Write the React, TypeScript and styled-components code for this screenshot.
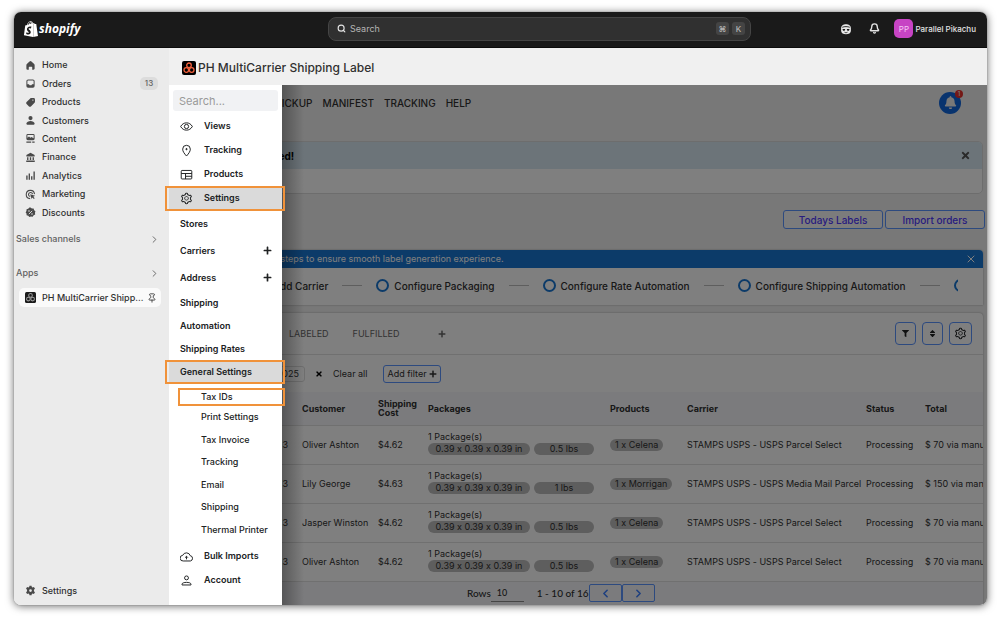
import React from "react";
import styled, { createGlobalStyle } from "styled-components";
import { SiShopify } from "react-icons/si";
import { FaPlus, FaTimes, FaFilter, FaSort, FaBell } from "react-icons/fa";
import { AiOutlineSetting } from "react-icons/ai";
import { Search, Bell, ChevronRight, ChevronLeft, X, Pin } from "lucide-react";

const Global = createGlobalStyle`
  *, *::before, *::after { box-sizing: border-box; }
  body { margin: 0; background: #fff; font-family: Inter, "Liberation Sans", sans-serif; font-size: 9px; line-height: 12px; color: #303030; font-variant-ligatures: no-contextual; }
  button, input, select { font: inherit; color: inherit; margin: 0; }
  button { cursor: pointer; padding: 0; border: 0; background: none; }
  a { color: inherit; text-decoration: none; }
  ul { list-style: none; margin: 0; padding: 0; }
  svg { display: block; flex: none; }
`;

const Page = styled.div`
  padding: 12px 13px 12px 14px;
`;
const Window = styled.div`
  border-radius: 7px;
  overflow: hidden;
  background: #f0f0f0;
`;
const Shadow = styled.div`
  border-radius: 7px;
  box-shadow: 0 1px 8px rgba(0, 0, 0, 0.6), 0 0 1px rgba(0, 0, 0, 0.6);
`;

/* ---------- top bar ---------- */
const TopBar = styled.header`
  display: grid;
  grid-template-columns: 305px minmax(0, 423px) 1fr;
  align-items: center;
  height: 36px;
  padding: 0 11px 2px 9px;
  background: #1a1a1a;
  color: #e3e3e3;
  border-bottom: 1px solid #0c0c0c;
`;
const Logo = styled.a`
  display: flex;
  align-items: center;
  color: #fff;
  font: italic 700 12px/16px "Open Sans", sans-serif;
`;
const SearchBar = styled.label`
  display: flex;
  align-items: center;
  gap: 4px;
  height: 24px;
  padding: 0 5px 0 8px;
  border: 1px solid #454545;
  border-radius: 8px;
  background: #303030;
`;
const SearchInput = styled.input`
  flex: 1;
  min-width: 0;
  border: 0;
  padding: 0;
  outline: 0;
  background: none;
  font-size: 9px;
  &::placeholder { color: #b5b5b5; opacity: 1; }
`;
const Key = styled.kbd`
  display: grid;
  place-items: center;
  width: 13px;
  height: 13px;
  margin-left: -1px;
  border-radius: 3px;
  background: #444;
  color: #b5b5b5;
  font: 500 8px/12px Inter, "DejaVu Sans", sans-serif;
`;
const TopActions = styled.div`
  display: flex;
  align-items: center;
  justify-content: flex-end;
`;
const TopIcon = styled.button`
  display: grid;
  place-items: center;
  width: 29px;
  height: 20px;
`;
const Account = styled.button`
  display: flex;
  align-items: center;
  gap: 2px;
  margin-left: 5px;
  font-weight: 500;
  font-size: 8px;
`;
const Avatar = styled.span`
  display: grid;
  place-items: center;
  width: 19px;
  height: 19px;
  border-radius: 5px;
  background: #c744c4;
  color: #f6c8f5;
  font-weight: 400;
`;

/* ---------- left navigation ---------- */
const Body = styled.div`
  display: grid;
  grid-template-columns: 155px minmax(0, 1fr);
`;
const Side = styled.nav`
  display: flex;
  flex-direction: column;
  background: #ebebeb;
  padding: 8px 0 4px;
  font-weight: 500;
`;
const NavList = styled.ul`
  display: grid;
  grid-auto-rows: 1fr;
  height: 166px;
`;
const NavLink = styled.a`
  display: flex;
  align-items: center;
  gap: 6px;
  height: 100%;
  padding: 0 11px;
`;
const Count = styled.span`
  margin-left: auto;
  width: 18px;
  line-height: 13px;
  border-radius: 5px;
  background: #dcdcdc;
  color: #616161;
  text-align: center;
  font-size: 8px;
`;
const Group = styled.button`
  display: flex;
  align-items: center;
  justify-content: space-between;
  height: 34px;
  padding: 0 9px 0 2px;
  color: #616161;
  font-weight: 500;
`;
const AppLink = styled.a`
  display: flex;
  align-items: center;
  gap: 6px;
  height: 19px;
  margin: -2px 8px 0 5px;
  padding: 0 4px 0 6px;
  border-radius: 5px;
  background: #fafafa;
  font-weight: 500;
  white-space: nowrap;
`;
const AppName = styled.span`
  flex: 1;
  min-width: 0;
`;
const SideBottom = styled.div`
  margin-top: auto;
  height: 20px;
`;

/* ---------- embedded app ---------- */
const AppTitle = styled.h1`
  display: flex;
  align-items: center;
  gap: 2px;
  height: 37px;
  margin: 0;
  padding: 2px 0 0 13px;
  font-weight: 500;
  font-size: 12px;
  line-height: 16px;
`;
const AppArea = styled.div`
  position: relative;
  display: grid;
  grid-template-columns: minmax(0, 1fr);
`;
const Content = styled.main`
  grid-area: 1 / 1;
  padding: 0 4px 0 6px;
  background: #f0f0f0;
  overflow: hidden;
`;
const Backdrop = styled.div`
  position: absolute;
  inset: 0;
  background: linear-gradient(90deg, rgba(0, 0, 0, 0.3) 113px, transparent 135px), rgba(0, 0, 0, 0.5);
`;
const Drawer = styled.nav`
  position: relative;
  grid-area: 1 / 1;
  width: 113px;
  padding-top: 5px;
  background: #fff;
  color: #202223;
  font-weight: 600;
`;
const DrawerSearch = styled.input`
  display: block;
  width: 105px;
  height: 21px;
  margin: 0 4px 3px;
  padding: 0 6px;
  border: 0;
  border-radius: 3px;
  background: #f1f2f4;
  font-size: 11px;
  font-weight: 400;
  &::placeholder { color: #9a9a9a; opacity: 1; }
`;
const MainItem = styled.a<{ $active?: boolean }>`
  position: relative;
  display: flex;
  align-items: center;
  gap: 11px;
  height: 24px;
  padding-left: 11px;
  background: ${(p) => (p.$active ? "#dadada" : "none")};
`;
const SubItem = styled.a<{ $tall?: boolean; $active?: boolean }>`
  position: relative;
  display: flex;
  align-items: center;
  justify-content: space-between;
  height: ${(p) => (p.$tall ? "27px" : "23px")};
  padding: 0 10px 0 11px;
  background: ${(p) => (p.$active ? "#dadada" : "none")};
`;
const LeafFirst = styled.a`
  position: relative;
  display: flex;
  align-items: center;
  height: 18px;
  margin: 5px 0 0 9px;
  padding-left: 23px;
  font-weight: 500;
`;
const LeafList = styled.ul`
  display: grid;
  grid-auto-rows: 1fr;
  height: 135px;
  margin-bottom: 3px;
`;
const Leaf = styled.a`
  display: flex;
  align-items: center;
  height: 100%;
  padding-left: 32px;
  font-weight: 500;
`;
const Marker = styled.span<{ $flush?: boolean }>`
  position: absolute;
  inset: ${(p) => (p.$flush ? "0 -3px 0 0" : "0 -3px -1px -4px")};
  border: 2px solid #f0923a;
  pointer-events: none;
`;

/* ---------- page under the drawer ---------- */
const TabsNav = styled.nav`
  display: flex;
  align-items: center;
  gap: 10px;
  height: 35px;
  padding: 0 22px 0 50px;
  font-weight: 500;
  font-size: 10px;
`;
const Notice = styled.button`
  position: relative;
  display: grid;
  place-items: center;
  width: 22px;
  height: 22px;
  margin-left: auto;
  border-radius: 50%;
  background: #1066dd;
  color: #f0f0f0;
`;
const NoticeCount = styled.span`
  position: absolute;
  top: -2px;
  right: -2px;
  width: 8px;
  border-radius: 4px;
  background: #e8302c;
  font-size: 6px;
  line-height: 8px;
`;
const Alert = styled.section`
  margin: 21px 0 0 0;
  border: 1px solid #dadada;
  border-radius: 5px;
  background: #fff;
  overflow: hidden;
`;
const AlertHead = styled.div`
  display: flex;
  align-items: center;
  justify-content: space-between;
  height: 27px;
  padding: 0 11px 0 76px;
  background: #d9e9f3;
  color: #000;
  font-weight: 700;
  font-size: 10px;
`;
const AlertBody = styled.div`
  height: 24px;
`;
const Actions = styled.div`
  display: flex;
  justify-content: flex-end;
  gap: 2px;
  margin: 16px -2px 21px 0;
`;
const Outline = styled.button`
  width: 100px;
  height: 19px;
  border: 1px solid #5a94ff;
  border-radius: 3px;
  background: #f8f8f8;
  color: #5038ff;
  font-weight: 500;
  font-size: 10px;
`;
const Card = styled.section`
  border-radius: 4px 4px 0 0;
  background: #fff;
  overflow: hidden;
  box-shadow: 0 0 2px rgba(0, 0, 0, 0.35);
`;
const Banner = styled.div`
  display: flex;
  align-items: center;
  justify-content: space-between;
  height: 18px;
  padding: 0 6px 0 36px;
  background: #1976d2;
  color: #fff;
  white-space: nowrap;
`;
const Steps = styled.ol`
  display: flex;
  align-items: center;
  gap: 14px;
  height: 37px;
  margin: 0 25px 0 0;
  padding: 0 0 2px 80px;
  list-style: none;
  overflow: hidden;
  font-weight: 500;
  font-size: 10px;
  white-space: nowrap;
`;
const Step = styled.li`
  display: flex;
  flex: none;
  align-items: center;
  gap: 5px;
  &::before {
    content: "";
    flex: none;
    width: 13px;
    height: 13px;
    border: 2px solid #1976d2;
    border-radius: 50%;
  }
`;
const StepLine = styled.li`
  flex: none;
  width: 20px;
  height: 1px;
  background: #bdbdbd;
`;
const Orders = styled(Card)`
  margin-top: 8px;
`;
const TabRow = styled.div`
  display: flex;
  align-items: center;
  gap: 24px;
  height: 42px;
  padding: 0 11px 0 114px;
  border-bottom: 1px solid #e0e0e0;
  color: #666;
`;
const AddTab = styled.button`
  padding-left: 14px;
`;
const Tools = styled.div`
  display: flex;
  align-items: center;
  gap: 6px;
  margin-left: auto;
`;
const Tool = styled.button<{ $wide?: boolean }>`
  display: grid;
  place-items: center;
  width: ${(p) => (p.$wide ? "23px" : "21px")};
  height: 23px;
  border: 1px solid #5a94ff;
  border-radius: 4px;
  color: #202223;
`;
const Filters = styled.div`
  display: flex;
  align-items: center;
  height: 37px;
`;
const DateChip = styled.span`
  width: 130px;
  padding: 1px 5px;
  border: 1px solid #dcdcdc;
  border-radius: 3px;
  text-align: right;
`;
const ChipClear = styled.button`
  display: grid;
  place-items: center;
  width: 28px;
  color: #000;
`;
const AddFilter = styled.button`
  display: flex;
  align-items: center;
  justify-content: space-between;
  width: 58px;
  height: 18px;
  margin-left: 16px;
  padding: 0 3px;
  border: 1px solid #5a94ff;
  border-radius: 3px;
`;
const Table = styled.table`
  width: 100%;
  table-layout: fixed;
  border-collapse: collapse;
`;
const Th = styled.th<{ $w?: number }>`
  width: ${(p) => (p.$w ? p.$w + "px" : "auto")};
  height: 33px;
  padding: 0;
  border-bottom: 1px solid #e0e0e0;
  background: #f6f7fa;
  text-align: left;
  line-height: 9px;
  font-weight: 700;
`;
const Td = styled.td<{ $end?: boolean }>`
  height: 39px;
  padding: ${(p) => (p.$end ? "0 14px 0 0" : "0")};
  border-bottom: 1px solid #e0e0e0;
  text-align: ${(p) => (p.$end ? "right" : "left")};
  white-space: nowrap;
  overflow: hidden;
`;
const Pack = styled.div`
  padding-bottom: 3px;
`;
const Pills = styled.div`
  display: flex;
  gap: 4px;
`;
const Pill = styled.span<{ $w?: number }>`
  display: inline-block;
  width: ${(p) => (p.$w ? p.$w + "px" : "auto")};
  padding: 0 5px;
  border-radius: 6px;
  background: #bdbdbd;
  text-align: center;
`;
const Pager = styled.footer`
  display: flex;
  align-items: center;
  height: 23px;
  padding-left: 292px;
  background: #f6f7fa;
  font: 500 10px/16px Lato, sans-serif;
`;
const RowsLabel = styled.label`
  display: flex;
  align-items: center;
`;
const RowsInput = styled.input`
  width: 33px;
  height: 18px;
  margin-right: 13px;
  padding: 0 6px;
  border: 0;
  border-bottom: 1px solid #8a8a8a;
  background: none;
  font-size: 9px;
`;
const Range = styled.span`
  min-width: 52px;
`;
const PageBtn = styled.button`
  display: grid;
  place-items: center;
  width: 33px;
  height: 18px;
  border: 1px solid #5a94ff;
  border-radius: 2px;
  color: #3f80ff;
`;

/* ---------- icons ---------- */
const glyphs: Record<string, React.ReactNode> = {
  home: <path d="M6.6 2.1a2 2 0 0 1 2.8 0l3.9 3.8c.5.5.7 1.1.7 1.8v4.6c0 1-.8 1.7-1.7 1.7H10.5V10.600a.8.8 0 0 0-.8-.8H6.300a.8.8 0 0 0-.8.8V14H3.700A1.700 1.700 0 0 1 2 12.300V7.700c0-.7.2-1.300.7-1.800z" />,
  orders: <path fillRule="evenodd" d="M4.500 2h7A2.500 2.500 0 0 1 14 4.500v7a2.500 2.500 0 0 1-2.500 2.500h-7A2.500 2.500 0 0 1 2 11.500v-7A2.500 2.500 0 0 1 4.500 2zm0 1.500a1 1 0 0 0-1 1V9h2.200l1 1.500h2.600l1-1.500h2.200V4.500a1 1 0 0 0-1-1z" />,
  products: <path fillRule="evenodd" d="M9 1.500h3.500a2 2 0 0 1 2 2V7c0 .5-.2 1-.6 1.400l-5.300 5.300c-.8.800-2 .8-2.800 0l-3.500-3.500c-.8-.8-.8-2 0-2.800l5.300-5.300c.4-.4.900-.6 1.400-.6zM11.500 5.500a1 1 0 1 0 0-2 1 1 0 0 0 0 2z" />,
  customers: <><circle cx="8" cy="4.500" r="3" /><path d="M2 12.500C2.500 10 5 8.800 8 8.800s5.500 1.200 6 3.700c.1.900-.5 1.500-1.300 1.500H3.300c-.8 0-1.400-.6-1.300-1.500z" /></>,
  content: <><path fillRule="evenodd" d="M4 1.500h8a2 2 0 0 1 2 2v5a2 2 0 0 1-2 2H4a2 2 0 0 1-2-2v-5a2 2 0 0 1 2-2zm-.5 5.500 2.300-2L8 7l1.500-1.300 3 1.800V3H3.500z" /><path d="M2 12.200h7v1.900H2zM10.500 12.200H14v1.900h-3.500z" /></>,
  finance: <path d="M8 1.200 14 4.500v2H2v-2zM3 7.500h2v4H3zM7 7.500h2v4H7zM11 7.500h2v4h-2zM1.800 12.200h12.400V14.500H1.800z" />,
  analytics: <path d="M1.800 8h2v6h-2zM5.300 5h2v9h-2zM8.800 9h2v5h-2zM12.300 2h2v12h-2z" />,
  marketing: <><path fill="none" stroke="currentColor" strokeWidth="1.600" d="M13.800 7.500A6 6 0 1 0 7.500 14M11 7.500A3 3 0 1 0 7.500 11" /><path d="m7.500 7.500 7.200 2.300-2.600 1.300 2 2.200-1.200 1.100-2.100-2.200-1.200 2.500z" /></>,
  discounts: (
    <>
      <path d="m8 .8 2 1.400 2.500.100.8 2.400L15.200 6.200 14.500 8.500l.3 2.400-2.200 1.200-1.500 2-2.400-.4-2.300.9-1.700-1.800-2.400-.7-.1-2.500L.9 8l1.200-2.100.2-2.500 2.400-.7L6.300.8z" />
      <path d="M10.400 5.600 5.600 10.400" stroke="#ebebeb" strokeWidth="1.300" />
      <circle cx="5.800" cy="5.800" r="1.100" fill="#ebebeb" />
      <circle cx="10.200" cy="10.200" r="1.100" fill="#ebebeb" />
    </>
  ),
  gear: <path fillRule="evenodd" d="M6.500 1h3l.4 1.900 1.200.7 1.900-.6 1.500 2.500L13 6.900v2.200l1.500 1.400L13 13l-1.900-.6-1.200.7L9.500 15h-3l-.4-1.900-1.200-.7L3 13l-1.500-2.500L3 9.100V6.900L1.500 5.500 3 3l1.900.6 1.200-.7zM8 6a2 2 0 1 0 0 4 2 2 0 0 0 0-4z" />,
};
const Glyph = ({ name }: { name: string }) => (
  <svg width="11" height="11" viewBox="0 0 16 16" fill="#4a4a4a" color="#4a4a4a" aria-hidden="true">{glyphs[name]}</svg>
);
const AppMark = ({ size, color, bg }: { size: number; color: string; bg: string }) => (
  <svg width={size} height={size} viewBox="0 0 14 14" aria-hidden="true">
    <rect width="14" height="14" rx="2" fill={bg} />
    <g fill="none" stroke={color} strokeWidth="1.300">
      <circle cx="7" cy="4.300" r="2.300" />
      <circle cx="4.300" cy="9" r="2.300" />
      <circle cx="9.700" cy="9" r="2.300" />
    </g>
  </svg>
);
const Sidekick = () => (
  <svg width="12" height="12" viewBox="0 0 16 16" aria-hidden="true">
    <path d="M8 1.500c3.500 0 6.500 1.500 6.500 5.500v3.500c0 2.500-3 4.500-6.500 4.500s-6.500-2-6.500-4.500V7C1.500 3 4.500 1.500 8 1.500z" fill="#e8e8e8" />
    <path d="M3 5.700c3-1.200 7-1.200 10 0" fill="none" stroke="#1a1a1a" strokeWidth="1.200" />
    <path d="M3.300 8h3.700l-.8 2.200H4zM9 8h3.700l-.7 2.200H9.800z" fill="#1a1a1a" />
    <path d="M6 12.300c1.200.8 2.800.8 4 0" fill="none" stroke="#1a1a1a" strokeWidth="1.100" />
  </svg>
);

const lineIcons: Record<string, React.ReactNode> = {
  eye: <><path d="M.8 8C2.500 5 5 3.500 8 3.500S13.500 5 15.200 8C13.500 11 11 12.500 8 12.500S2.500 11 .8 8z" /><circle cx="8" cy="8" r="2.600" /></>,
  place: <><path d="M8 14.800C5 11.500 3.300 9 3.300 6.300a4.700 4.700 0 0 1 9.400 0C12.700 9 11 11.500 8 14.800z" /><circle cx="8" cy="6.300" r="0.800" fill="currentColor" /></>,
  panel: <><rect x="1.500" y="3" width="13" height="10.500" rx="1" /><path d="M1.500 6.800h13M6.800 10.200h7.700M6.800 6.800v6.700" /></>,
  cloud: <><path d="M4 13.500A3.500 3.500 0 0 1 3.400 6.500 4.900 4.900 0 0 1 12.600 7a3.300 3.300 0 0 1 .2 6.500z" /><path d="M8 11.500V7.800M6.300 9.400 8 7.700l1.700 1.700" /></>,
  person: <><circle cx="8" cy="4.800" r="2.400" /><path d="M2.500 13.500v-1c0-1.500 2.800-2.200 5.500-2.200s5.500.7 5.500 2.200v1z" /></>,
};
const LineIcon = ({ name }: { name: string }) => (
  <svg width="13" height="13" viewBox="0 0 16 16" fill="none" stroke="currentColor" strokeWidth="1.200" strokeLinejoin="round" aria-hidden="true">
    {lineIcons[name]}
  </svg>
);

/* ---------- data ---------- */
const navItems = [
  ["home", "Home"], ["orders", "Orders"], ["products", "Products"], ["customers", "Customers"], ["content", "Content"],
  ["finance", "Finance"], ["analytics", "Analytics"], ["marketing", "Marketing"], ["discounts", "Discounts"],
];
const leaves = ["Print Settings", "Tax Invoice", "Tracking", "Email", "Shipping", "Thermal Printer"];
const orders = [
  { name: "Oliver Ashton", cost: "$4.62", lbs: "0.5 lbs", item: "1 x Celena", carrier: "STAMPS USPS - USPS Parcel Select", total: "$ 70 via manual" },
  { name: "Lily George", cost: "$4.63", lbs: "1 lbs", item: "1 x Morrigan", carrier: "STAMPS USPS - USPS Media Mail Parcel", total: "$ 150 via manual" },
  { name: "Jasper Winston", cost: "$4.62", lbs: "0.5 lbs", item: "1 x Celena", carrier: "STAMPS USPS - USPS Parcel Select", total: "$ 70 via manual" },
  { name: "Oliver Ashton", cost: "$4.62", lbs: "0.5 lbs", item: "1 x Celena", carrier: "STAMPS USPS - USPS Parcel Select", total: "$ 70 via manual" },
];

export default function App() {
  return (
    <Page>
      <Global />
      <Shadow>
        <Window>
          <TopBar>
            <Logo href="#"><SiShopify size={16} />shopify</Logo>
            <SearchBar>
              <Search size={9} strokeWidth={3} />
              <SearchInput placeholder="Search" aria-label="Search" />
              <Key>⌘</Key>
              <Key>K</Key>
            </SearchBar>
            <TopActions>
              <TopIcon aria-label="Assistant"><Sidekick /></TopIcon>
              <TopIcon aria-label="Notifications"><Bell size={11} strokeWidth={3} /></TopIcon>
              <Account><Avatar>PP</Avatar>Parallel Pikachu</Account>
            </TopActions>
          </TopBar>
          <Body>
            <Side>
              <NavList>
                {navItems.map(([icon, label]) => (
                  <li key={icon}>
                    <NavLink href="#"><Glyph name={icon} />{label}{icon === "orders" && <Count>13</Count>}</NavLink>
                  </li>
                ))}
              </NavList>
              <Group>Sales channels<ChevronRight size={11} /></Group>
              <Group>Apps<ChevronRight size={11} /></Group>
              <AppLink href="#">
                <AppMark size={11} color="#9a9a9a" bg="#1a1a1a" />
                <AppName>PH MultiCarrier Shipp...</AppName>
                <Pin size={10} strokeWidth={2} />
              </AppLink>
              <SideBottom><NavLink href="#"><Glyph name="gear" />Settings</NavLink></SideBottom>
            </Side>
            <div>
              <AppTitle><AppMark size={14} color="#f2603c" bg="#000" />PH MultiCarrier Shipping Label</AppTitle>
              <AppArea>
                <Content>
                  <TabsNav>
                    <a href="#">ORDERS</a>
                    <a href="#">PICKUP</a>
                    <a href="#">MANIFEST</a>
                    <a href="#">TRACKING</a>
                    <a href="#">HELP</a>
                    <Notice aria-label="Notices"><FaBell size={13} /><NoticeCount>1</NoticeCount></Notice>
                  </TabsNav>
                  <Alert>
                    <AlertHead>Verified!<FaTimes size={11} color="#555" /></AlertHead>
                    <AlertBody />
                  </Alert>
                  <Actions>
                    <Outline>Todays Labels</Outline>
                    <Outline>Import orders</Outline>
                  </Actions>
                  <Card>
                    <Banner>Complete these steps to ensure smooth label generation experience.<X size={12} /></Banner>
                    <Steps>
                      <Step>Add Carrier</Step><StepLine />
                      <Step>Configure Packaging</Step><StepLine />
                      <Step>Configure Rate Automation</Step><StepLine />
                      <Step>Configure Shipping Automation</Step><StepLine />
                      <Step />
                    </Steps>
                  </Card>
                  <Orders>
                    <TabRow>
                      <span>LABELED</span>
                      <span>FULFILLED</span>
                      <AddTab aria-label="Add tab"><FaPlus size={8} /></AddTab>
                      <Tools>
                        <Tool aria-label="Filter"><FaFilter size={7} /></Tool>
                        <Tool aria-label="Sort"><FaSort size={9} /></Tool>
                        <Tool $wide aria-label="Table settings"><AiOutlineSetting size={13} /></Tool>
                      </Tools>
                    </TabRow>
                    <Filters>
                      <DateChip>1/13/2025</DateChip>
                      <ChipClear aria-label="Remove filter"><FaTimes size={8} /></ChipClear>
                      <button>Clear all</button>
                      <AddFilter>Add filter<FaPlus size={8} /></AddFilter>
                    </Filters>
                    <Table>
                      <thead>
                        <tr>
                          <Th $w={127} />
                          <Th $w={76}>Customer</Th>
                          <Th $w={50}>Shipping Cost</Th>
                          <Th $w={182}>Packages</Th>
                          <Th $w={77}>Products</Th>
                          <Th $w={179}>Carrier</Th>
                          <Th $w={59}>Status</Th>
                          <Th>Total</Th>
                        </tr>
                      </thead>
                      <tbody>
                        {orders.map((o, i) => (
                          <tr key={i}>
                            <Td $end>13</Td>
                            <Td>{o.name}</Td>
                            <Td>{o.cost}</Td>
                            <Td>
                              <Pack>
                                1 Package(s)
                                <Pills><Pill $w={102}>0.39 x 0.39 x 0.39 in</Pill><Pill $w={60}>{o.lbs}</Pill></Pills>
                              </Pack>
                            </Td>
                            <Td><Pill>{o.item}</Pill></Td>
                            <Td>{o.carrier}</Td>
                            <Td>Processing</Td>
                            <Td>{o.total}</Td>
                          </tr>
                        ))}
                      </tbody>
                    </Table>
                    <Pager>
                      <RowsLabel>Rows<RowsInput defaultValue="10" /></RowsLabel>
                      <Range>1 - 10 of 16</Range>
                      <PageBtn aria-label="Previous page"><ChevronLeft size={13} strokeWidth={3} /></PageBtn>
                      <PageBtn aria-label="Next page"><ChevronRight size={13} strokeWidth={3} /></PageBtn>
                    </Pager>
                  </Orders>
                </Content>
                <Backdrop />
                <Drawer>
                  <DrawerSearch placeholder="Search..." aria-label="Search menu" />
                  <MainItem href="#"><LineIcon name="eye" />Views</MainItem>
                  <MainItem href="#"><LineIcon name="place" />Tracking</MainItem>
                  <MainItem href="#"><LineIcon name="panel" />Products</MainItem>
                  <MainItem href="#" $active><AiOutlineSetting size={13} />Settings<Marker /></MainItem>
                  <SubItem href="#" $tall>Stores</SubItem>
                  <SubItem href="#" $tall>Carriers<FaPlus size={9} /></SubItem>
                  <SubItem href="#" $tall>Address<FaPlus size={9} /></SubItem>
                  <SubItem href="#">Shipping</SubItem>
                  <SubItem href="#">Automation</SubItem>
                  <SubItem href="#">Shipping Rates</SubItem>
                  <SubItem href="#" $active>General Settings<Marker /></SubItem>
                  <LeafFirst href="#">Tax IDs<Marker $flush /></LeafFirst>
                  <LeafList>
                    {leaves.map((l) => <li key={l}><Leaf href="#">{l}</Leaf></li>)}
                  </LeafList>
                  <MainItem href="#"><LineIcon name="cloud" />Bulk Imports</MainItem>
                  <MainItem href="#"><LineIcon name="person" />Account</MainItem>
                </Drawer>
              </AppArea>
            </div>
          </Body>
        </Window>
      </Shadow>
    </Page>
  );
}
